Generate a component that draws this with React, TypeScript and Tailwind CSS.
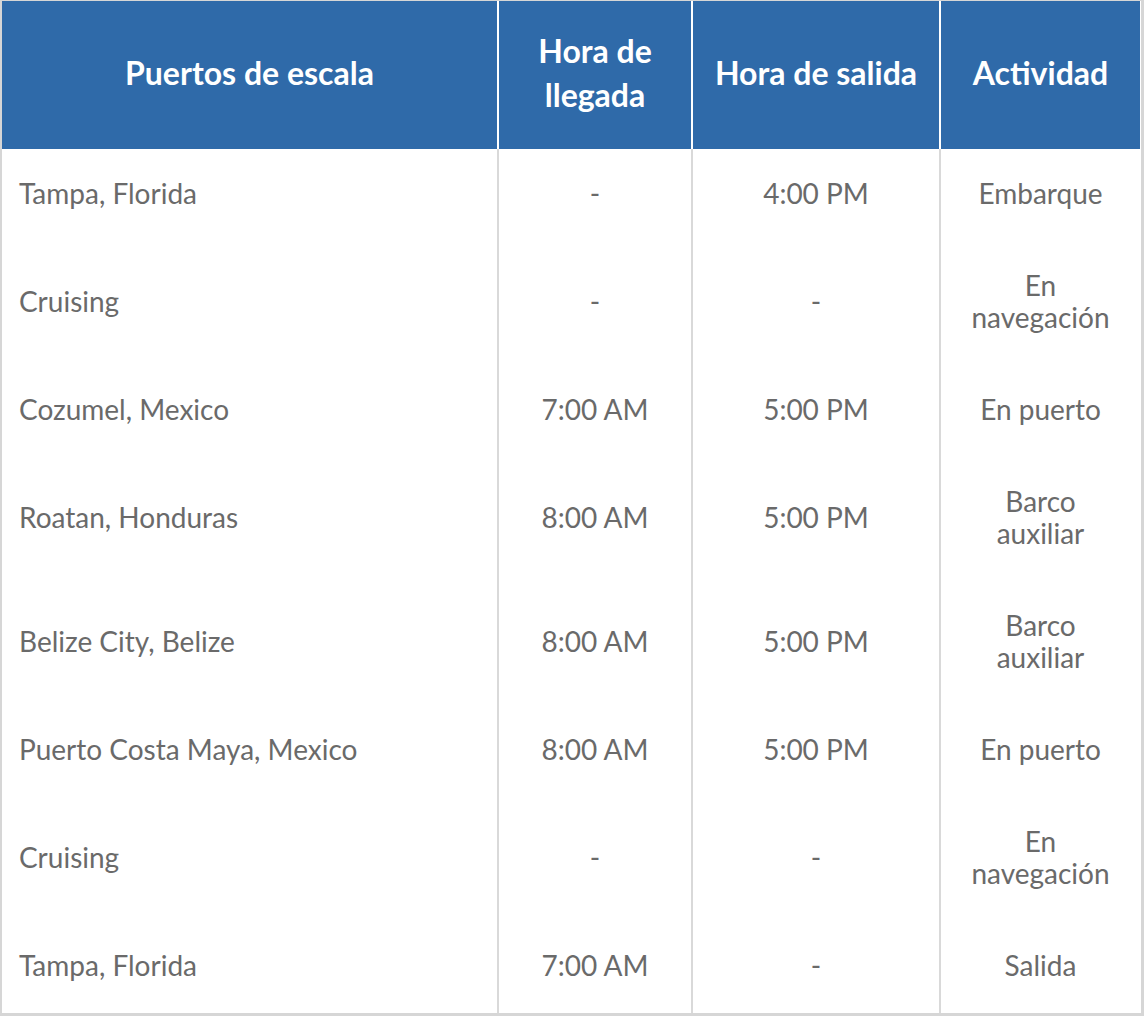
import { FC } from "react";

interface PortRow {
  port: string;
  arrival: string;
  departure: string;
  activity: string;
}

const rows: PortRow[] = [
  { port: "Tampa, Florida", arrival: "-", departure: "4:00 PM", activity: "Embarque" },
  { port: "Cruising", arrival: "-", departure: "-", activity: "En navegacio\u0301n" },
  { port: "Cozumel, Mexico", arrival: "7:00 AM", departure: "5:00 PM", activity: "En puerto" },
  { port: "Roatan, Honduras", arrival: "8:00 AM", departure: "5:00 PM", activity: "Barco auxiliar" },
  { port: "Belize City, Belize", arrival: "8:00 AM", departure: "5:00 PM", activity: "Barco auxiliar" },
  { port: "Puerto Costa Maya, Mexico", arrival: "8:00 AM", departure: "5:00 PM", activity: "En puerto" },
  { port: "Cruising", arrival: "-", departure: "-", activity: "En navegacio\u0301n" },
  { port: "Tampa, Florida", arrival: "7:00 AM", departure: "-", activity: "Salida" },
];

const thClass =
  "bg-[#2f6aa9] text-white font-bold text-[32px] leading-[44px] text-center align-middle px-4 pt-0 pb-1";
const tdClass = "pt-[28px] pb-[32px] text-[28px] leading-8 text-[#6a6a6a] align-middle";

const App: FC = () => {
  return (
    <div className="w-[1144px] bg-white" style={{ fontFamily: "Lato, 'Open Sans', sans-serif" }}>
      <table className="w-[1144px] table-fixed border-separate border-spacing-0 border-t border-l-2 border-r-[3px] border-b-[3px] border-[#d6d6d6]">
        <colgroup>
          <col className="w-[497px]" />
          <col className="w-[194px]" />
          <col className="w-[248px]" />
          <col className="w-[200px]" />
        </colgroup>
        <thead>
          <tr className="h-[148px]">
            <th className={`${thClass} border-r-2 border-white`}>Puertos de escala</th>
            <th className={`${thClass} border-r-2 border-white`}>
              Hora de
              <br />
              llegada
            </th>
            <th className={`${thClass} border-r-2 border-white !px-1`}>Hora de salida</th>
            <th className={`${thClass} border-r border-white`}>Actividad</th>
          </tr>
        </thead>
        <tbody>
          {rows.map((row, i) => (
            <tr key={i}>
              <td className={`${tdClass} pl-[17px] pr-4 text-left border-r-2 border-[#d9d9d9]`}>{row.port}</td>
              <td className={`${tdClass} text-center border-r-2 border-[#d9d9d9]`}>{row.arrival}</td>
              <td className={`${tdClass} text-center border-r-2 border-[#d9d9d9]`}>{row.departure}</td>
              <td className={`${tdClass} text-center px-6 border-r border-white`}>{row.activity}</td>
            </tr>
          ))}
        </tbody>
      </table>
    </div>
  );
};

export default App;
